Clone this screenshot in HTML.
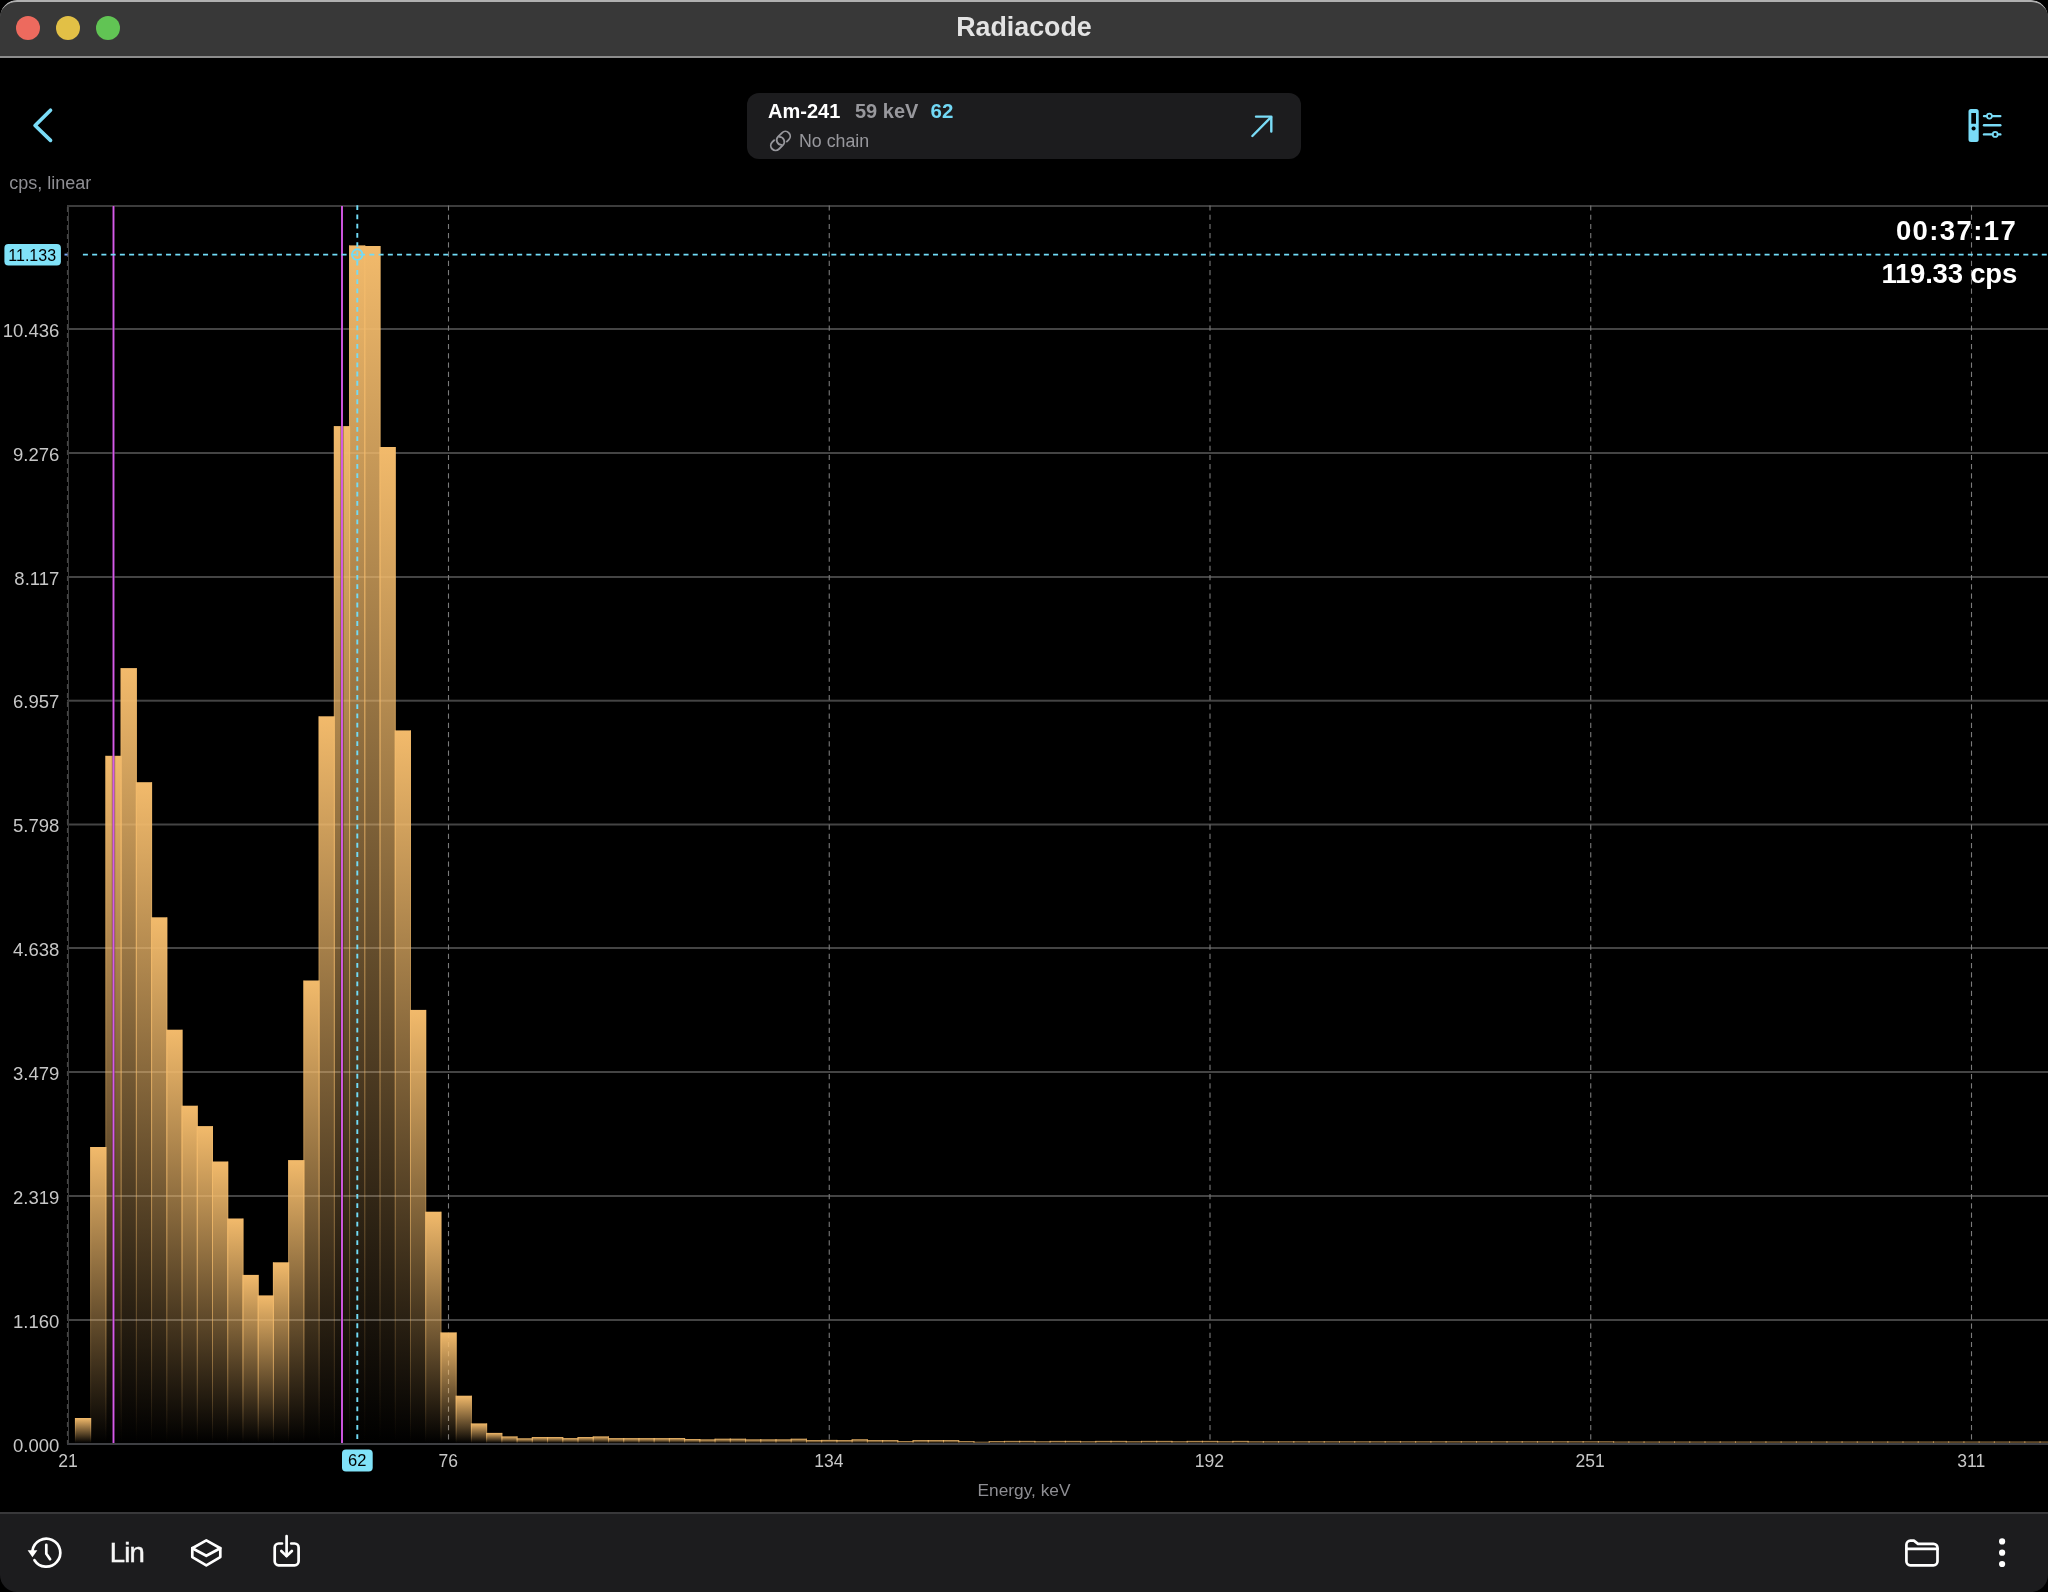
<!DOCTYPE html>
<html><head><meta charset="utf-8">
<style>
html,body{margin:0;padding:0;background:#000;width:2048px;height:1592px;overflow:hidden;}
body{font-family:"Liberation Sans",sans-serif;position:relative;}
.win{position:absolute;left:0;top:0;width:2048px;height:1592px;border-radius:17px;overflow:hidden;background:#000;}
.titlebar{position:absolute;left:0;top:0;width:2048px;height:58px;background:#383838;box-sizing:border-box;border-top:2px solid #b0b0b0;border-bottom:2px solid #8c8c8c;border-radius:17px 17px 0 0;}
.tl{position:absolute;top:16px;width:24px;height:24px;border-radius:50%;}
.card{position:absolute;left:747px;top:93px;width:554px;height:66px;background:#1c1c1e;border-radius:12px;}
.toolbar{position:absolute;left:0;top:1512px;width:2048px;height:80px;background:#1c1c1e;border-top:2px solid #38383a;box-sizing:border-box;}
svg{position:absolute;left:0;top:0;will-change:transform;}
</style></head><body>
<div class="win">
 <div class="titlebar"></div>
 <div class="tl" style="left:16px;background:#ed6a5e"></div>
 <div class="tl" style="left:56px;background:#e2c046"></div>
 <div class="tl" style="left:96px;background:#61c454"></div>
 <div class="card"></div>
 <div class="toolbar"></div>

 <svg width="2048" height="1592" font-family="Liberation Sans">
  <defs>
   <linearGradient id="bg" x1="0" y1="0" x2="0" y2="1">
    <stop offset="0" stop-color="#f2ba6b" stop-opacity="1"/>
    <stop offset="1" stop-color="#f2ba6b" stop-opacity="0"/>
   </linearGradient>
  </defs>
  <!-- title -->
  <text x="1024" y="36" text-anchor="middle" font-weight="bold" font-size="26.8" fill="#e3e3e3">Radiacode</text>

  <!-- card text -->
  <g font-weight="bold" font-size="20">
   <text x="768" y="118.05" fill="#fff">Am-241</text>
   <text x="855" y="118.05" fill="#98989d">59 keV</text>
   <text x="930.5" y="118.05" fill="#72d8f5" font-size="20.5">62</text>
  </g>
  <text x="799" y="146.9" font-size="17.8" fill="#98989d">No chain</text>

  <!-- back chevron -->
  <polyline points="50.5,110.3 35.1,125.5 50.5,140.4" fill="none" stroke="#7adcf7" stroke-width="3.7" stroke-linecap="round" stroke-linejoin="round"/>
  <!-- card link icon -->
  <g fill="none" stroke="#98989d" stroke-width="1.8" stroke-linecap="round">
   <path d="M781.5,144.9 A4.8,4.8 0 0 1 778.1,136.7 L782.0,132.8 A4.8,4.8 0 0 1 788.8,139.6 L786.85,141.55"/>
   <path d="M779.5,136.9 A4.8,4.8 0 0 1 782.9,145.1 L779.0,149.0 A4.8,4.8 0 0 1 772.2,142.2 L774.15,140.25"/>
  </g>
  <!-- arrow -->
  <g fill="none" stroke="#7adcf7" stroke-width="2.4" stroke-linecap="round" stroke-linejoin="round">
   <line x1="1252.4" y1="136" x2="1271" y2="117.2"/>
   <polyline points="1256,116.6 1271.3,116.6 1271.3,131.6"/>
  </g>
  <!-- settings icon -->
  <path fill="#7adcf7" fill-rule="evenodd" d="M1971,108.9 h5.2 a2.5,2.5 0 0 1 2.5,2.5 v28 a2.5,2.5 0 0 1 -2.5,2.5 h-5.2 a2.5,2.5 0 0 1 -2.5,-2.5 v-28 a2.5,2.5 0 0 1 2.5,-2.5 Z M1971.3,113.1 v10.7 h4.7 v-10.7 Z M1973.6,126.4 a2.1,2.1 0 1 0 0.01,0 Z"/>
  <g fill="none" stroke="#7adcf7" stroke-width="2.4" stroke-linecap="round">
   <line x1="1984" y1="116.1" x2="1986.6" y2="116.1"/><line x1="1992.2" y1="116.1" x2="2000.3" y2="116.1"/>
   <circle cx="1989.4" cy="116.1" r="2.5" stroke-width="1.7"/>
   <line x1="1984" y1="125.2" x2="2000.3" y2="125.2"/>
   <line x1="1984" y1="134.4" x2="1992.4" y2="134.4"/><line x1="1998" y1="134.4" x2="2000.3" y2="134.4"/>
   <circle cx="1995.2" cy="134.4" r="2.5" stroke-width="1.7"/>
  </g>

  <!-- y-axis title -->
  <text x="9.3" y="188.6" font-size="18" fill="#8e8e93">cps, linear</text>

  <!-- grid -->
  <rect x="67" y="205" width="1981" height="2" fill="#3c3c3c"/>
  <rect x="67" y="1319.0" width="1981" height="2" fill="#444"/>
<rect x="67" y="1195.0" width="1981" height="2" fill="#444"/>
<rect x="67" y="1071.0" width="1981" height="2" fill="#444"/>
<rect x="67" y="947.0" width="1981" height="2" fill="#444"/>
<rect x="67" y="823.5" width="1981" height="2" fill="#444"/>
<rect x="67" y="699.7" width="1981" height="2" fill="#444"/>
<rect x="67" y="576.0" width="1981" height="2" fill="#444"/>
<rect x="67" y="452.0" width="1981" height="2" fill="#444"/>
<rect x="67" y="328.0" width="1981" height="2" fill="#444"/>
  <line x1="448.5" y1="205.4" x2="448.5" y2="1439.5" stroke="#7a7a7a" stroke-width="1.1" stroke-dasharray="5.2 4.04"/>
<line x1="829.25" y1="205.4" x2="829.25" y2="1439.5" stroke="#7a7a7a" stroke-width="1.1" stroke-dasharray="5.2 4.04"/>
<line x1="1210.0" y1="205.4" x2="1210.0" y2="1439.5" stroke="#7a7a7a" stroke-width="1.1" stroke-dasharray="5.2 4.04"/>
<line x1="1590.75" y1="205.4" x2="1590.75" y2="1439.5" stroke="#7a7a7a" stroke-width="1.1" stroke-dasharray="5.2 4.04"/>
<line x1="1971.5" y1="205.4" x2="1971.5" y2="1439.5" stroke="#7a7a7a" stroke-width="1.1" stroke-dasharray="5.2 4.04"/>
  <line x1="68.5" y1="205" x2="68.5" y2="1444" stroke="#3a3a3a" stroke-width="1"/>
  <line x1="67.5" y1="207" x2="67.5" y2="1444" stroke="#454545" stroke-width="1.2" stroke-dasharray="5 4"/>

  <!-- bars -->
  <rect x="74.93" y="1418.00" width="16.230" height="25.00" fill="url(#bg)"/>
<rect x="90.16" y="1147.00" width="16.230" height="296.00" fill="url(#bg)"/>
<rect x="105.39" y="755.80" width="16.230" height="687.20" fill="url(#bg)"/>
<rect x="120.62" y="668.10" width="16.230" height="774.90" fill="url(#bg)"/>
<rect x="135.85" y="782.20" width="16.230" height="660.80" fill="url(#bg)"/>
<rect x="151.08" y="917.30" width="16.230" height="525.70" fill="url(#bg)"/>
<rect x="166.31" y="1029.70" width="16.230" height="413.30" fill="url(#bg)"/>
<rect x="181.54" y="1105.70" width="16.230" height="337.30" fill="url(#bg)"/>
<rect x="196.77" y="1126.10" width="16.230" height="316.90" fill="url(#bg)"/>
<rect x="212.00" y="1161.50" width="16.230" height="281.50" fill="url(#bg)"/>
<rect x="227.23" y="1218.50" width="16.230" height="224.50" fill="url(#bg)"/>
<rect x="242.46" y="1274.90" width="16.230" height="168.10" fill="url(#bg)"/>
<rect x="257.69" y="1295.40" width="16.230" height="147.60" fill="url(#bg)"/>
<rect x="272.91" y="1262.30" width="16.230" height="180.70" fill="url(#bg)"/>
<rect x="288.14" y="1160.10" width="16.230" height="282.90" fill="url(#bg)"/>
<rect x="303.37" y="980.50" width="16.230" height="462.50" fill="url(#bg)"/>
<rect x="318.60" y="716.30" width="16.230" height="726.70" fill="url(#bg)"/>
<rect x="333.83" y="426.10" width="16.230" height="1016.90" fill="url(#bg)"/>
<rect x="349.06" y="245.40" width="16.230" height="1197.60" fill="url(#bg)"/>
<rect x="364.29" y="246.00" width="16.230" height="1197.00" fill="url(#bg)"/>
<rect x="379.52" y="447.00" width="16.230" height="996.00" fill="url(#bg)"/>
<rect x="394.75" y="730.40" width="16.230" height="712.60" fill="url(#bg)"/>
<rect x="409.98" y="1009.90" width="16.230" height="433.10" fill="url(#bg)"/>
<rect x="425.21" y="1211.70" width="16.230" height="231.30" fill="url(#bg)"/>
<rect x="440.44" y="1332.40" width="16.230" height="110.60" fill="url(#bg)"/>
<rect x="455.67" y="1395.70" width="16.230" height="47.30" fill="url(#bg)"/>
<rect x="470.90" y="1423.40" width="16.230" height="19.60" fill="url(#bg)"/>
<rect x="486.13" y="1432.90" width="16.230" height="10.10" fill="url(#bg)"/>
<rect x="501.36" y="1436.40" width="16.230" height="6.60" fill="url(#bg)"/>
<rect x="516.59" y="1438.30" width="16.230" height="4.70" fill="url(#bg)"/>
<rect x="531.82" y="1437.00" width="16.230" height="6.00" fill="url(#bg)"/>
<rect x="547.05" y="1437.00" width="16.230" height="6.00" fill="url(#bg)"/>
<rect x="562.28" y="1438.10" width="16.230" height="4.90" fill="url(#bg)"/>
<rect x="577.51" y="1437.00" width="16.230" height="6.00" fill="url(#bg)"/>
<rect x="592.74" y="1436.40" width="16.230" height="6.60" fill="url(#bg)"/>
<rect x="607.97" y="1438.10" width="16.230" height="4.90" fill="url(#bg)"/>
<rect x="623.20" y="1438.10" width="16.230" height="4.90" fill="url(#bg)"/>
<rect x="638.43" y="1438.10" width="16.230" height="4.90" fill="url(#bg)"/>
<rect x="653.65" y="1438.10" width="16.230" height="4.90" fill="url(#bg)"/>
<rect x="668.88" y="1438.00" width="16.230" height="5.00" fill="url(#bg)"/>
<rect x="684.11" y="1439.00" width="16.230" height="4.00" fill="url(#bg)"/>
<rect x="699.34" y="1439.40" width="16.230" height="3.60" fill="url(#bg)"/>
<rect x="714.57" y="1438.70" width="16.230" height="4.30" fill="url(#bg)"/>
<rect x="729.80" y="1438.70" width="16.230" height="4.30" fill="url(#bg)"/>
<rect x="745.03" y="1439.40" width="16.230" height="3.60" fill="url(#bg)"/>
<rect x="760.26" y="1439.40" width="16.230" height="3.60" fill="url(#bg)"/>
<rect x="775.49" y="1439.40" width="16.230" height="3.60" fill="url(#bg)"/>
<rect x="790.72" y="1438.70" width="16.230" height="4.30" fill="url(#bg)"/>
<rect x="805.95" y="1440.10" width="16.230" height="2.90" fill="url(#bg)"/>
<rect x="821.18" y="1439.90" width="16.230" height="3.10" fill="url(#bg)"/>
<rect x="836.41" y="1440.10" width="16.230" height="2.90" fill="url(#bg)"/>
<rect x="851.64" y="1439.30" width="16.230" height="3.70" fill="url(#bg)"/>
<rect x="866.87" y="1440.10" width="16.230" height="2.90" fill="url(#bg)"/>
<rect x="882.10" y="1440.10" width="16.230" height="2.90" fill="url(#bg)"/>
<rect x="897.33" y="1441.10" width="16.230" height="1.90" fill="url(#bg)"/>
<rect x="912.56" y="1440.10" width="16.230" height="2.90" fill="url(#bg)"/>
<rect x="927.79" y="1440.10" width="16.230" height="2.90" fill="url(#bg)"/>
<rect x="943.02" y="1440.10" width="16.230" height="2.90" fill="url(#bg)"/>
<rect x="958.25" y="1441.10" width="16.230" height="1.90" fill="url(#bg)"/>
<rect x="973.48" y="1441.80" width="16.230" height="1.20" fill="url(#bg)"/>
<rect x="988.71" y="1441.10" width="16.230" height="1.90" fill="url(#bg)"/>
<rect x="1003.94" y="1440.90" width="16.230" height="2.10" fill="url(#bg)"/>
<rect x="1019.17" y="1440.90" width="16.230" height="2.10" fill="url(#bg)"/>
<rect x="1034.39" y="1441.40" width="16.230" height="1.60" fill="url(#bg)"/>
<rect x="1049.62" y="1440.90" width="16.230" height="2.10" fill="url(#bg)"/>
<rect x="1064.85" y="1440.90" width="16.230" height="2.10" fill="url(#bg)"/>
<rect x="1080.08" y="1441.40" width="16.230" height="1.60" fill="url(#bg)"/>
<rect x="1095.31" y="1440.90" width="16.230" height="2.10" fill="url(#bg)"/>
<rect x="1110.54" y="1440.90" width="16.230" height="2.10" fill="url(#bg)"/>
<rect x="1125.77" y="1441.40" width="16.230" height="1.60" fill="url(#bg)"/>
<rect x="1141.00" y="1440.90" width="16.230" height="2.10" fill="url(#bg)"/>
<rect x="1156.23" y="1440.90" width="16.230" height="2.10" fill="url(#bg)"/>
<rect x="1171.46" y="1441.40" width="16.230" height="1.60" fill="url(#bg)"/>
<rect x="1186.69" y="1440.90" width="16.230" height="2.10" fill="url(#bg)"/>
<rect x="1201.92" y="1440.90" width="16.230" height="2.10" fill="url(#bg)"/>
<rect x="1217.15" y="1441.40" width="16.230" height="1.60" fill="url(#bg)"/>
<rect x="1232.38" y="1440.90" width="16.230" height="2.10" fill="url(#bg)"/>
<rect x="1247.61" y="1441.50" width="16.230" height="1.50" fill="url(#bg)"/>
<rect x="1262.84" y="1441.50" width="16.230" height="1.50" fill="url(#bg)"/>
<rect x="1278.07" y="1441.50" width="16.230" height="1.50" fill="url(#bg)"/>
<rect x="1293.30" y="1441.50" width="16.230" height="1.50" fill="url(#bg)"/>
<rect x="1308.53" y="1441.50" width="16.230" height="1.50" fill="url(#bg)"/>
<rect x="1323.76" y="1441.50" width="16.230" height="1.50" fill="url(#bg)"/>
<rect x="1338.99" y="1441.50" width="16.230" height="1.50" fill="url(#bg)"/>
<rect x="1354.22" y="1441.50" width="16.230" height="1.50" fill="url(#bg)"/>
<rect x="1369.45" y="1441.50" width="16.230" height="1.50" fill="url(#bg)"/>
<rect x="1384.68" y="1441.50" width="16.230" height="1.50" fill="url(#bg)"/>
<rect x="1399.91" y="1441.50" width="16.230" height="1.50" fill="url(#bg)"/>
<rect x="1415.13" y="1441.50" width="16.230" height="1.50" fill="url(#bg)"/>
<rect x="1430.36" y="1441.50" width="16.230" height="1.50" fill="url(#bg)"/>
<rect x="1445.59" y="1441.50" width="16.230" height="1.50" fill="url(#bg)"/>
<rect x="1460.82" y="1441.50" width="16.230" height="1.50" fill="url(#bg)"/>
<rect x="1476.05" y="1441.50" width="16.230" height="1.50" fill="url(#bg)"/>
<rect x="1491.28" y="1441.50" width="16.230" height="1.50" fill="url(#bg)"/>
<rect x="1506.51" y="1441.50" width="16.230" height="1.50" fill="url(#bg)"/>
<rect x="1521.74" y="1441.50" width="16.230" height="1.50" fill="url(#bg)"/>
<rect x="1536.97" y="1441.50" width="16.230" height="1.50" fill="url(#bg)"/>
<rect x="1552.20" y="1441.50" width="16.230" height="1.50" fill="url(#bg)"/>
<rect x="1567.43" y="1441.50" width="16.230" height="1.50" fill="url(#bg)"/>
<rect x="1582.66" y="1441.50" width="16.230" height="1.50" fill="url(#bg)"/>
<rect x="1597.89" y="1441.50" width="16.230" height="1.50" fill="url(#bg)"/>
<rect x="1613.12" y="1441.70" width="16.230" height="1.30" fill="url(#bg)"/>
<rect x="1628.35" y="1441.70" width="16.230" height="1.30" fill="url(#bg)"/>
<rect x="1643.58" y="1441.70" width="16.230" height="1.30" fill="url(#bg)"/>
<rect x="1658.81" y="1441.70" width="16.230" height="1.30" fill="url(#bg)"/>
<rect x="1674.04" y="1441.70" width="16.230" height="1.30" fill="url(#bg)"/>
<rect x="1689.27" y="1441.70" width="16.230" height="1.30" fill="url(#bg)"/>
<rect x="1704.50" y="1441.70" width="16.230" height="1.30" fill="url(#bg)"/>
<rect x="1719.73" y="1441.70" width="16.230" height="1.30" fill="url(#bg)"/>
<rect x="1734.96" y="1441.70" width="16.230" height="1.30" fill="url(#bg)"/>
<rect x="1750.19" y="1441.70" width="16.230" height="1.30" fill="url(#bg)"/>
<rect x="1765.42" y="1441.70" width="16.230" height="1.30" fill="url(#bg)"/>
<rect x="1780.65" y="1441.70" width="16.230" height="1.30" fill="url(#bg)"/>
<rect x="1795.87" y="1441.70" width="16.230" height="1.30" fill="url(#bg)"/>
<rect x="1811.10" y="1441.70" width="16.230" height="1.30" fill="url(#bg)"/>
<rect x="1826.33" y="1441.70" width="16.230" height="1.30" fill="url(#bg)"/>
<rect x="1841.56" y="1441.70" width="16.230" height="1.30" fill="url(#bg)"/>
<rect x="1856.79" y="1441.70" width="16.230" height="1.30" fill="url(#bg)"/>
<rect x="1872.02" y="1441.70" width="16.230" height="1.30" fill="url(#bg)"/>
<rect x="1887.25" y="1441.70" width="16.230" height="1.30" fill="url(#bg)"/>
<rect x="1902.48" y="1441.70" width="16.230" height="1.30" fill="url(#bg)"/>
<rect x="1917.71" y="1441.70" width="16.230" height="1.30" fill="url(#bg)"/>
<rect x="1932.94" y="1441.70" width="16.230" height="1.30" fill="url(#bg)"/>
<rect x="1948.17" y="1441.70" width="16.230" height="1.30" fill="url(#bg)"/>
<rect x="1963.40" y="1441.70" width="16.230" height="1.30" fill="url(#bg)"/>
<rect x="1978.63" y="1441.70" width="16.230" height="1.30" fill="url(#bg)"/>
<rect x="1993.86" y="1441.70" width="16.230" height="1.30" fill="url(#bg)"/>
<rect x="2009.09" y="1441.70" width="16.230" height="1.30" fill="url(#bg)"/>
<rect x="2024.32" y="1441.70" width="16.230" height="1.30" fill="url(#bg)"/>
<rect x="2039.55" y="1441.70" width="16.230" height="1.30" fill="url(#bg)"/>
<g fill="url(#bg)" opacity="0.5"><rect x="74.93" y="1418.00" width="1" height="25.00"/><rect x="90.16" y="1418.00" width="1" height="25.00"/><rect x="90.16" y="1147.00" width="1" height="296.00"/><rect x="105.39" y="1147.00" width="1" height="296.00"/><rect x="105.39" y="755.80" width="1" height="687.20"/><rect x="120.62" y="755.80" width="1" height="687.20"/><rect x="120.62" y="668.10" width="1" height="774.90"/><rect x="135.85" y="668.10" width="1" height="774.90"/><rect x="135.85" y="782.20" width="1" height="660.80"/><rect x="151.08" y="782.20" width="1" height="660.80"/><rect x="151.08" y="917.30" width="1" height="525.70"/><rect x="166.31" y="917.30" width="1" height="525.70"/><rect x="166.31" y="1029.70" width="1" height="413.30"/><rect x="181.54" y="1029.70" width="1" height="413.30"/><rect x="181.54" y="1105.70" width="1" height="337.30"/><rect x="196.77" y="1105.70" width="1" height="337.30"/><rect x="196.77" y="1126.10" width="1" height="316.90"/><rect x="212.00" y="1126.10" width="1" height="316.90"/><rect x="212.00" y="1161.50" width="1" height="281.50"/><rect x="227.23" y="1161.50" width="1" height="281.50"/><rect x="227.23" y="1218.50" width="1" height="224.50"/><rect x="242.46" y="1218.50" width="1" height="224.50"/><rect x="242.46" y="1274.90" width="1" height="168.10"/><rect x="257.69" y="1274.90" width="1" height="168.10"/><rect x="257.69" y="1295.40" width="1" height="147.60"/><rect x="272.91" y="1295.40" width="1" height="147.60"/><rect x="272.91" y="1262.30" width="1" height="180.70"/><rect x="288.14" y="1262.30" width="1" height="180.70"/><rect x="288.14" y="1160.10" width="1" height="282.90"/><rect x="303.37" y="1160.10" width="1" height="282.90"/><rect x="303.37" y="980.50" width="1" height="462.50"/><rect x="318.60" y="980.50" width="1" height="462.50"/><rect x="318.60" y="716.30" width="1" height="726.70"/><rect x="333.83" y="716.30" width="1" height="726.70"/><rect x="333.83" y="426.10" width="1" height="1016.90"/><rect x="349.06" y="426.10" width="1" height="1016.90"/><rect x="349.06" y="245.40" width="1" height="1197.60"/><rect x="364.29" y="245.40" width="1" height="1197.60"/><rect x="364.29" y="246.00" width="1" height="1197.00"/><rect x="379.52" y="246.00" width="1" height="1197.00"/><rect x="379.52" y="447.00" width="1" height="996.00"/><rect x="394.75" y="447.00" width="1" height="996.00"/><rect x="394.75" y="730.40" width="1" height="712.60"/><rect x="409.98" y="730.40" width="1" height="712.60"/><rect x="409.98" y="1009.90" width="1" height="433.10"/><rect x="425.21" y="1009.90" width="1" height="433.10"/><rect x="425.21" y="1211.70" width="1" height="231.30"/><rect x="440.44" y="1211.70" width="1" height="231.30"/><rect x="440.44" y="1332.40" width="1" height="110.60"/><rect x="455.67" y="1332.40" width="1" height="110.60"/><rect x="455.67" y="1395.70" width="1" height="47.30"/><rect x="470.90" y="1395.70" width="1" height="47.30"/><rect x="470.90" y="1423.40" width="1" height="19.60"/><rect x="486.13" y="1423.40" width="1" height="19.60"/><rect x="486.13" y="1432.90" width="1" height="10.10"/><rect x="501.36" y="1432.90" width="1" height="10.10"/><rect x="501.36" y="1436.40" width="1" height="6.60"/><rect x="516.59" y="1436.40" width="1" height="6.60"/><rect x="516.59" y="1438.30" width="1" height="4.70"/><rect x="531.82" y="1438.30" width="1" height="4.70"/><rect x="531.82" y="1437.00" width="1" height="6.00"/><rect x="547.05" y="1437.00" width="1" height="6.00"/><rect x="547.05" y="1437.00" width="1" height="6.00"/><rect x="562.28" y="1437.00" width="1" height="6.00"/><rect x="562.28" y="1438.10" width="1" height="4.90"/><rect x="577.51" y="1438.10" width="1" height="4.90"/><rect x="577.51" y="1437.00" width="1" height="6.00"/><rect x="592.74" y="1437.00" width="1" height="6.00"/><rect x="592.74" y="1436.40" width="1" height="6.60"/><rect x="607.97" y="1436.40" width="1" height="6.60"/><rect x="607.97" y="1438.10" width="1" height="4.90"/><rect x="623.20" y="1438.10" width="1" height="4.90"/><rect x="623.20" y="1438.10" width="1" height="4.90"/><rect x="638.43" y="1438.10" width="1" height="4.90"/><rect x="638.43" y="1438.10" width="1" height="4.90"/><rect x="653.65" y="1438.10" width="1" height="4.90"/><rect x="653.65" y="1438.10" width="1" height="4.90"/><rect x="668.88" y="1438.10" width="1" height="4.90"/><rect x="668.88" y="1438.00" width="1" height="5.00"/><rect x="684.11" y="1438.00" width="1" height="5.00"/><rect x="684.11" y="1439.00" width="1" height="4.00"/><rect x="699.34" y="1439.00" width="1" height="4.00"/><rect x="699.34" y="1439.40" width="1" height="3.60"/><rect x="714.57" y="1439.40" width="1" height="3.60"/><rect x="714.57" y="1438.70" width="1" height="4.30"/><rect x="729.80" y="1438.70" width="1" height="4.30"/><rect x="729.80" y="1438.70" width="1" height="4.30"/><rect x="745.03" y="1438.70" width="1" height="4.30"/><rect x="745.03" y="1439.40" width="1" height="3.60"/><rect x="760.26" y="1439.40" width="1" height="3.60"/><rect x="760.26" y="1439.40" width="1" height="3.60"/><rect x="775.49" y="1439.40" width="1" height="3.60"/><rect x="775.49" y="1439.40" width="1" height="3.60"/><rect x="790.72" y="1439.40" width="1" height="3.60"/><rect x="790.72" y="1438.70" width="1" height="4.30"/><rect x="805.95" y="1438.70" width="1" height="4.30"/><rect x="805.95" y="1440.10" width="1" height="2.90"/><rect x="821.18" y="1440.10" width="1" height="2.90"/><rect x="821.18" y="1439.90" width="1" height="3.10"/><rect x="836.41" y="1439.90" width="1" height="3.10"/><rect x="836.41" y="1440.10" width="1" height="2.90"/><rect x="851.64" y="1440.10" width="1" height="2.90"/><rect x="851.64" y="1439.30" width="1" height="3.70"/><rect x="866.87" y="1439.30" width="1" height="3.70"/><rect x="866.87" y="1440.10" width="1" height="2.90"/><rect x="882.10" y="1440.10" width="1" height="2.90"/><rect x="882.10" y="1440.10" width="1" height="2.90"/><rect x="897.33" y="1440.10" width="1" height="2.90"/><rect x="897.33" y="1441.10" width="1" height="1.90"/><rect x="912.56" y="1441.10" width="1" height="1.90"/><rect x="912.56" y="1440.10" width="1" height="2.90"/><rect x="927.79" y="1440.10" width="1" height="2.90"/><rect x="927.79" y="1440.10" width="1" height="2.90"/><rect x="943.02" y="1440.10" width="1" height="2.90"/><rect x="943.02" y="1440.10" width="1" height="2.90"/><rect x="958.25" y="1440.10" width="1" height="2.90"/><rect x="958.25" y="1441.10" width="1" height="1.90"/><rect x="973.48" y="1441.10" width="1" height="1.90"/><rect x="973.48" y="1441.80" width="1" height="1.20"/><rect x="988.71" y="1441.80" width="1" height="1.20"/><rect x="988.71" y="1441.10" width="1" height="1.90"/><rect x="1003.94" y="1441.10" width="1" height="1.90"/><rect x="1003.94" y="1440.90" width="1" height="2.10"/><rect x="1019.17" y="1440.90" width="1" height="2.10"/><rect x="1019.17" y="1440.90" width="1" height="2.10"/><rect x="1034.39" y="1440.90" width="1" height="2.10"/><rect x="1034.39" y="1441.40" width="1" height="1.60"/><rect x="1049.62" y="1441.40" width="1" height="1.60"/><rect x="1049.62" y="1440.90" width="1" height="2.10"/><rect x="1064.85" y="1440.90" width="1" height="2.10"/><rect x="1064.85" y="1440.90" width="1" height="2.10"/><rect x="1080.08" y="1440.90" width="1" height="2.10"/><rect x="1080.08" y="1441.40" width="1" height="1.60"/><rect x="1095.31" y="1441.40" width="1" height="1.60"/><rect x="1095.31" y="1440.90" width="1" height="2.10"/><rect x="1110.54" y="1440.90" width="1" height="2.10"/><rect x="1110.54" y="1440.90" width="1" height="2.10"/><rect x="1125.77" y="1440.90" width="1" height="2.10"/><rect x="1125.77" y="1441.40" width="1" height="1.60"/><rect x="1141.00" y="1441.40" width="1" height="1.60"/><rect x="1141.00" y="1440.90" width="1" height="2.10"/><rect x="1156.23" y="1440.90" width="1" height="2.10"/><rect x="1156.23" y="1440.90" width="1" height="2.10"/><rect x="1171.46" y="1440.90" width="1" height="2.10"/><rect x="1171.46" y="1441.40" width="1" height="1.60"/><rect x="1186.69" y="1441.40" width="1" height="1.60"/><rect x="1186.69" y="1440.90" width="1" height="2.10"/><rect x="1201.92" y="1440.90" width="1" height="2.10"/><rect x="1201.92" y="1440.90" width="1" height="2.10"/><rect x="1217.15" y="1440.90" width="1" height="2.10"/><rect x="1217.15" y="1441.40" width="1" height="1.60"/><rect x="1232.38" y="1441.40" width="1" height="1.60"/><rect x="1232.38" y="1440.90" width="1" height="2.10"/><rect x="1247.61" y="1440.90" width="1" height="2.10"/><rect x="1247.61" y="1441.50" width="1" height="1.50"/><rect x="1262.84" y="1441.50" width="1" height="1.50"/><rect x="1262.84" y="1441.50" width="1" height="1.50"/><rect x="1278.07" y="1441.50" width="1" height="1.50"/><rect x="1278.07" y="1441.50" width="1" height="1.50"/><rect x="1293.30" y="1441.50" width="1" height="1.50"/><rect x="1293.30" y="1441.50" width="1" height="1.50"/><rect x="1308.53" y="1441.50" width="1" height="1.50"/><rect x="1308.53" y="1441.50" width="1" height="1.50"/><rect x="1323.76" y="1441.50" width="1" height="1.50"/><rect x="1323.76" y="1441.50" width="1" height="1.50"/><rect x="1338.99" y="1441.50" width="1" height="1.50"/><rect x="1338.99" y="1441.50" width="1" height="1.50"/><rect x="1354.22" y="1441.50" width="1" height="1.50"/><rect x="1354.22" y="1441.50" width="1" height="1.50"/><rect x="1369.45" y="1441.50" width="1" height="1.50"/><rect x="1369.45" y="1441.50" width="1" height="1.50"/><rect x="1384.68" y="1441.50" width="1" height="1.50"/><rect x="1384.68" y="1441.50" width="1" height="1.50"/><rect x="1399.91" y="1441.50" width="1" height="1.50"/><rect x="1399.91" y="1441.50" width="1" height="1.50"/><rect x="1415.13" y="1441.50" width="1" height="1.50"/><rect x="1415.13" y="1441.50" width="1" height="1.50"/><rect x="1430.36" y="1441.50" width="1" height="1.50"/><rect x="1430.36" y="1441.50" width="1" height="1.50"/><rect x="1445.59" y="1441.50" width="1" height="1.50"/><rect x="1445.59" y="1441.50" width="1" height="1.50"/><rect x="1460.82" y="1441.50" width="1" height="1.50"/><rect x="1460.82" y="1441.50" width="1" height="1.50"/><rect x="1476.05" y="1441.50" width="1" height="1.50"/><rect x="1476.05" y="1441.50" width="1" height="1.50"/><rect x="1491.28" y="1441.50" width="1" height="1.50"/><rect x="1491.28" y="1441.50" width="1" height="1.50"/><rect x="1506.51" y="1441.50" width="1" height="1.50"/><rect x="1506.51" y="1441.50" width="1" height="1.50"/><rect x="1521.74" y="1441.50" width="1" height="1.50"/><rect x="1521.74" y="1441.50" width="1" height="1.50"/><rect x="1536.97" y="1441.50" width="1" height="1.50"/><rect x="1536.97" y="1441.50" width="1" height="1.50"/><rect x="1552.20" y="1441.50" width="1" height="1.50"/><rect x="1552.20" y="1441.50" width="1" height="1.50"/><rect x="1567.43" y="1441.50" width="1" height="1.50"/><rect x="1567.43" y="1441.50" width="1" height="1.50"/><rect x="1582.66" y="1441.50" width="1" height="1.50"/><rect x="1582.66" y="1441.50" width="1" height="1.50"/><rect x="1597.89" y="1441.50" width="1" height="1.50"/><rect x="1597.89" y="1441.50" width="1" height="1.50"/><rect x="1613.12" y="1441.50" width="1" height="1.50"/><rect x="1613.12" y="1441.70" width="1" height="1.30"/><rect x="1628.35" y="1441.70" width="1" height="1.30"/><rect x="1628.35" y="1441.70" width="1" height="1.30"/><rect x="1643.58" y="1441.70" width="1" height="1.30"/><rect x="1643.58" y="1441.70" width="1" height="1.30"/><rect x="1658.81" y="1441.70" width="1" height="1.30"/><rect x="1658.81" y="1441.70" width="1" height="1.30"/><rect x="1674.04" y="1441.70" width="1" height="1.30"/><rect x="1674.04" y="1441.70" width="1" height="1.30"/><rect x="1689.27" y="1441.70" width="1" height="1.30"/><rect x="1689.27" y="1441.70" width="1" height="1.30"/><rect x="1704.50" y="1441.70" width="1" height="1.30"/><rect x="1704.50" y="1441.70" width="1" height="1.30"/><rect x="1719.73" y="1441.70" width="1" height="1.30"/><rect x="1719.73" y="1441.70" width="1" height="1.30"/><rect x="1734.96" y="1441.70" width="1" height="1.30"/><rect x="1734.96" y="1441.70" width="1" height="1.30"/><rect x="1750.19" y="1441.70" width="1" height="1.30"/><rect x="1750.19" y="1441.70" width="1" height="1.30"/><rect x="1765.42" y="1441.70" width="1" height="1.30"/><rect x="1765.42" y="1441.70" width="1" height="1.30"/><rect x="1780.65" y="1441.70" width="1" height="1.30"/><rect x="1780.65" y="1441.70" width="1" height="1.30"/><rect x="1795.87" y="1441.70" width="1" height="1.30"/><rect x="1795.87" y="1441.70" width="1" height="1.30"/><rect x="1811.10" y="1441.70" width="1" height="1.30"/><rect x="1811.10" y="1441.70" width="1" height="1.30"/><rect x="1826.33" y="1441.70" width="1" height="1.30"/><rect x="1826.33" y="1441.70" width="1" height="1.30"/><rect x="1841.56" y="1441.70" width="1" height="1.30"/><rect x="1841.56" y="1441.70" width="1" height="1.30"/><rect x="1856.79" y="1441.70" width="1" height="1.30"/><rect x="1856.79" y="1441.70" width="1" height="1.30"/><rect x="1872.02" y="1441.70" width="1" height="1.30"/><rect x="1872.02" y="1441.70" width="1" height="1.30"/><rect x="1887.25" y="1441.70" width="1" height="1.30"/><rect x="1887.25" y="1441.70" width="1" height="1.30"/><rect x="1902.48" y="1441.70" width="1" height="1.30"/><rect x="1902.48" y="1441.70" width="1" height="1.30"/><rect x="1917.71" y="1441.70" width="1" height="1.30"/><rect x="1917.71" y="1441.70" width="1" height="1.30"/><rect x="1932.94" y="1441.70" width="1" height="1.30"/><rect x="1932.94" y="1441.70" width="1" height="1.30"/><rect x="1948.17" y="1441.70" width="1" height="1.30"/><rect x="1948.17" y="1441.70" width="1" height="1.30"/><rect x="1963.40" y="1441.70" width="1" height="1.30"/><rect x="1963.40" y="1441.70" width="1" height="1.30"/><rect x="1978.63" y="1441.70" width="1" height="1.30"/><rect x="1978.63" y="1441.70" width="1" height="1.30"/><rect x="1993.86" y="1441.70" width="1" height="1.30"/><rect x="1993.86" y="1441.70" width="1" height="1.30"/><rect x="2009.09" y="1441.70" width="1" height="1.30"/><rect x="2009.09" y="1441.70" width="1" height="1.30"/><rect x="2024.32" y="1441.70" width="1" height="1.30"/><rect x="2024.32" y="1441.70" width="1" height="1.30"/><rect x="2039.55" y="1441.70" width="1" height="1.30"/><rect x="2039.55" y="1441.70" width="1" height="1.30"/><rect x="2054.78" y="1441.70" width="1" height="1.30"/></g>

  <!-- axis bottom -->
  <rect x="67" y="1443" width="1981" height="2" fill="#3e3f43"/>

  <!-- magenta -->
  <g stroke-width="1.9">
  <line x1="113.5" y1="206" x2="113.5" y2="1443" stroke="#000" stroke-width="3.4" opacity="0.35"/>
  <line x1="342" y1="206" x2="342" y2="1443" stroke="#000" stroke-width="3.4" opacity="0.35"/>
  <line x1="113.5" y1="206" x2="113.5" y2="1443" stroke="#d65ae8"/>
  <line x1="342" y1="206" x2="342" y2="1443" stroke="#d65ae8"/>
  </g>

  <!-- cyan crosshair -->
  <line x1="357.3" y1="205.3" x2="357.3" y2="1442" stroke="#72dcf7" stroke-width="1.9" stroke-dasharray="4.8 4.44"/>
  <line x1="82.9" y1="254.6" x2="2048" y2="254.6" stroke="#72dcf7" stroke-width="1.9" stroke-dasharray="5 4.24"/>
  <line x1="64.5" y1="254.6" x2="67.5" y2="254.6" stroke="#7aa6f0" stroke-width="1.9"/>
  <circle cx="357.3" cy="254.6" r="5.3" fill="none" stroke="#72dcf7" stroke-width="1.9"/>

  <!-- y labels -->
  <g font-size="18.5" fill="#c7c7c7">
  <text x="59.3" y="1327.6" text-anchor="end">1.160</text>
<text x="59.3" y="1203.6" text-anchor="end">2.319</text>
<text x="59.3" y="1079.6" text-anchor="end">3.479</text>
<text x="59.3" y="955.6" text-anchor="end">4.638</text>
<text x="59.3" y="832.1" text-anchor="end">5.798</text>
<text x="59.3" y="708.3" text-anchor="end">6.957</text>
<text x="59.3" y="584.6" text-anchor="end">8.117</text>
<text x="59.3" y="460.6" text-anchor="end">9.276</text>
<text x="59.3" y="336.6" text-anchor="end">10.436</text>
  <text x="59.3" y="1452.1" text-anchor="end">0.000</text>
  </g>
  <rect x="4.4" y="243.9" width="56.5" height="21.7" rx="4" fill="#80e2f8"/>
  <text x="32.2" y="261.3" text-anchor="middle" font-size="16" fill="#000">11.133</text>

  <!-- x labels -->
  <g font-size="17.5" fill="#c7c7c7" text-anchor="middle">
   <text x="68" y="1466.7">21</text>
   <text x="448.3" y="1466.7">76</text>
   <text x="828.9" y="1466.7">134</text>
   <text x="1209.4" y="1466.7">192</text>
   <text x="1590.2" y="1466.7">251</text>
   <text x="1971.2" y="1466.7">311</text>
  </g>
  <rect x="342" y="1449.6" width="30.7" height="21.8" rx="4" fill="#80e2f8"/>
  <text x="357.2" y="1466.3" text-anchor="middle" font-size="16.5" fill="#000">62</text>
  <text x="1024" y="1495.8" text-anchor="middle" font-size="17.3" fill="#8e8e93">Energy, keV</text>

  <!-- time / cps -->
  <g font-weight="bold" font-size="27.5" fill="#fff" text-anchor="end">
   <text x="2017.2" y="239.6" letter-spacing="1.4">00:37:17</text>
   <text x="2017" y="282.6" letter-spacing="-0.2">119.33 cps</text>
  </g>

  <!-- toolbar -->
  <text x="109.8" y="1562.3" font-size="27.5" fill="#f5f5f5" stroke="#f5f5f5" stroke-width="0.45" letter-spacing="-0.9">Lin</text>
  <g fill="none" stroke="#fff" stroke-width="2.7" stroke-linecap="round" stroke-linejoin="round">
   <path d="M32.46,1550.6 A14,14 0 1 1 34.48,1560.2"/>
   <polyline points="46.3,1544.8 46.3,1553.7 50.1,1559.2"/>
   <polygon points="206.3,1540.4 220.3,1548.2 206.3,1555.8 192.3,1548.2"/>
   <polyline points="192.3,1548.2 192.3,1557.1 206.3,1565.3 220.3,1557.1 220.3,1548.2"/>
   <path d="M282.0,1543.5 H278.7 a4,4 0 0 0 -4,4 V1561.3 a4,4 0 0 0 4,4 H294.6 a4,4 0 0 0 4,-4 V1547.5 a4,4 0 0 0 -4,-4 H291.2"/>
   <line x1="286.6" y1="1536" x2="286.6" y2="1556.1"/>
   <polyline points="281.3,1551 286.6,1556.1 291.9,1551"/>
   <path d="M1906.4,1561.3 V1544.7 a4,4 0 0 1 4,-4 H1913.9 L1918,1543.8 H1933.5 a4,4 0 0 1 4,4 V1561.3 a4,4 0 0 1 -4,4 H1910.4 a4,4 0 0 1 -4,-4 Z"/>
   <line x1="1906.4" y1="1548.9" x2="1937.5" y2="1548.9"/>
  </g>
  <polygon points="27.6,1550.2 37.4,1550.2 32.4,1557.2" fill="#fff"/>
  <g fill="#fff">
   <circle cx="2002.1" cy="1541.4" r="3.1"/>
   <circle cx="2002.1" cy="1552.7" r="3.1"/>
   <circle cx="2002.1" cy="1564" r="3.1"/>
  </g>
 </svg>
</div>
</body></html>
